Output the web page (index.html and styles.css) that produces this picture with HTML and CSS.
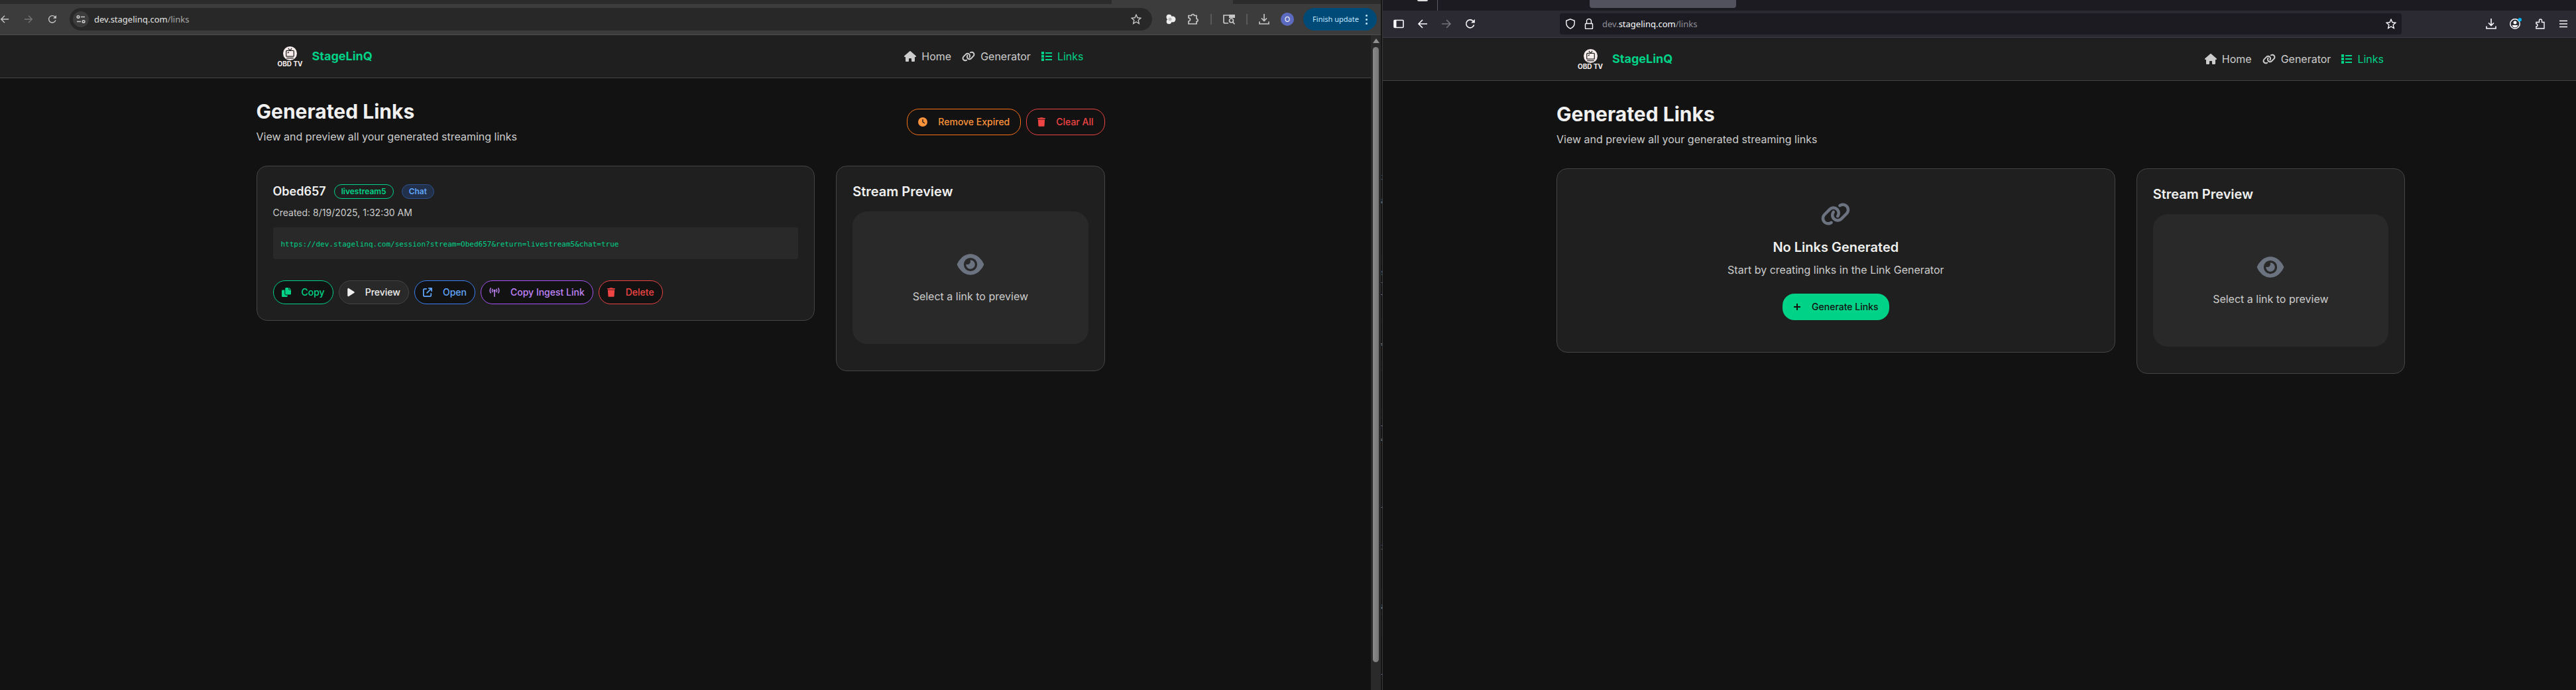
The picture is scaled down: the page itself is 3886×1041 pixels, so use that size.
FILE: index.html
```html
<!DOCTYPE html>
<html lang="en">
<head>
<meta charset="utf-8">
<title>StageLinQ</title>
<link rel="stylesheet" href="styles.css">
</head>
<body>
<svg class="sprite" aria-hidden="true">
  <symbol id="house" viewBox="0 0 576 512"><path d="M575.8 255.5c0 18-15 32.1-32 32.1l-32 0 .7 160.2c0 2.7-.2 5.4-.5 8.1l0 16.2c0 22.1-17.9 40-40 40l-16 0c-1.1 0-2.2 0-3.3-.1c-1.4 .1-2.8 .1-4.2 .1L416 512l-24 0c-22.1 0-40-17.9-40-40l0-24 0-64c0-17.7-14.3-32-32-32l-64 0c-17.7 0-32 14.3-32 32l0 64 0 24c0 22.1-17.9 40-40 40l-24 0-31.9 0c-1.5 0-3-.1-4.5-.2c-1.2 .1-2.4 .2-3.6 .2l-16 0c-22.1 0-40-17.9-40-40l0-112c0-.9 0-1.9 .1-2.8l0-69.7-32 0c-18 0-32-14-32-32.1c0-9 3-17 10-24L266.4 8c7-7 15-8 22-8s15 2 21 7L564.8 231.5c8 7 12 15 11 24z"/></symbol>
  <symbol id="link" viewBox="0 0 640 512"><path d="M579.8 267.7c56.5-56.5 56.5-148 0-204.5c-50-50-128.8-56.5-186.3-15.4l-1.6 1.1c-14.4 10.3-17.7 30.3-7.4 44.6s30.3 17.7 44.6 7.4l1.6-1.1c32.1-22.9 76-19.3 103.8 8.6c31.5 31.5 31.5 82.5 0 114L422.3 334.8c-31.5 31.5-82.5 31.5-114 0c-27.9-27.9-31.5-71.8-8.6-103.8l1.1-1.6c10.3-14.4 6.9-34.4-7.4-44.6s-34.4-6.9-44.6 7.4l-1.1 1.6C206.5 251.2 213 330 263 380c56.5 56.5 148 56.5 204.5 0L579.8 267.7zM60.2 244.3c-56.5 56.5-56.5 148 0 204.5c50 50 128.8 56.5 186.3 15.4l1.6-1.1c14.4-10.3 17.7-30.3 7.4-44.6s-30.3-17.7-44.6-7.4l-1.6 1.1c-32.1 22.9-76 19.3-103.8-8.6C74 372 74 321 105.5 289.5L217.7 177.2c31.5-31.5 82.5-31.5 114 0c27.9 27.9 31.5 71.8 8.6 103.9l-1.1 1.6c-10.3 14.4-6.9 34.4 7.4 44.6s34.4 6.9 44.6-7.4l1.1-1.6C433.5 260.8 427 182 377 132c-56.5-56.5-148-56.5-204.5 0L60.2 244.3z"/></symbol>
  <symbol id="list" viewBox="0 0 16 16"><path d="M0 1h4v4H0zM0 6h4v4H0zM0 11h4v4H0zM6 2h10v2H6zM6 7h10v2H6zM6 12h10v2H6z"/></symbol>
  <symbol id="eye" viewBox="0 0 576 512"><path d="M288 32c-80.8 0-145.5 36.8-192.6 80.6C48.6 156 17.3 208 2.5 243.7c-3.3 7.9-3.3 16.7 0 24.6C17.3 304 48.6 356 95.4 399.4C142.5 443.2 207.2 480 288 480s145.5-36.8 192.6-80.6c46.8-43.5 78.1-95.4 93-131.1c3.3-7.9 3.3-16.7 0-24.6c-14.9-35.7-46.2-87.7-93-131.1C433.5 68.8 368.8 32 288 32zM144 256a144 144 0 1 1 288 0 144 144 0 1 1 -288 0zm144-64c0 35.3-28.7 64-64 64c-7.1 0-13.9-1.2-20.3-3.3c-5.5-1.8-11.9 1.6-11.7 7.4c.3 6.9 1.3 13.8 3.2 20.7c13.7 51.2 66.4 81.6 117.6 67.9s81.6-66.4 67.9-117.6c-11.1-41.5-47.8-69.4-88.6-71.1c-5.8-.2-9.2 6.1-7.4 11.7c2.1 6.4 3.3 13.2 3.3 20.3z"/></symbol>
  <symbol id="clock" viewBox="0 0 512 512"><path d="M256 0a256 256 0 1 1 0 512A256 256 0 1 1 256 0zM232 120l0 136c0 8 4 15.5 10.7 20l96 64c11 7.4 25.9 4.4 33.3-6.7s4.4-25.9-6.7-33.3L280 243.2 280 120c0-13.3-10.7-24-24-24s-24 10.7-24 24z"/></symbol>
  <symbol id="trash" viewBox="0 0 448 512"><path d="M135.2 17.7L128 32 32 32C14.3 32 0 46.3 0 64S14.3 96 32 96l384 0c17.7 0 32-14.3 32-32s-14.3-32-32-32l-96 0-7.2-14.3C307.4 6.8 296.3 0 284.2 0L163.8 0c-12.1 0-23.2 6.8-28.6 17.7zM416 128L32 128 53.2 467c1.6 25.3 22.6 45 47.9 45l245.8 0c25.3 0 46.3-19.7 47.9-45L416 128z"/></symbol>
  <symbol id="copy" viewBox="0 0 512 512"><path d="M240 0h140v100c0 16 12 28 28 28h104v208c0 26-22 48-48 48H240c-26 0-48-22-48-48V48c0-26 22-48 48-48zM412 0l100 96H412zM48 128h112v208c0 44 36 80 80 80h80v48c0 26-22 48-48 48H48c-26 0-48-22-48-48V176c0-26 22-48 48-48z"/></symbol>
  <symbol id="play" viewBox="0 0 384 512"><path d="M73 39c-14.8-9.1-33.4-9.4-48.5-.9S0 62.6 0 80L0 432c0 17.4 9.4 33.4 24.5 41.9s33.7 8.1 48.5-.9L361 297c14.3-8.7 23-24.2 23-41s-8.7-32.2-23-41L73 39z"/></symbol>
  <symbol id="open" viewBox="0 0 512 512"><path d="M320 0c-17.7 0-32 14.3-32 32s14.3 32 32 32l82.7 0L201.4 265.4c-12.5 12.5-12.5 32.8 0 45.3s32.8 12.5 45.3 0L448 109.3l0 82.7c0 17.7 14.3 32 32 32s32-14.3 32-32l0-160c0-17.7-14.3-32-32-32L320 0zM80 32C35.8 32 0 67.8 0 112L0 432c0 44.2 35.8 80 80 80l320 0c44.2 0 80-35.8 80-80l0-112c0-17.7-14.3-32-32-32s-32 14.3-32 32l0 112c0 8.8-7.2 16-16 16L80 448c-8.8 0-16-7.2-16-16l0-320c0-8.8 7.2-16 16-16l112 0c17.7 0 32-14.3 32-32s-14.3-32-32-32L80 32z"/></symbol>
  <symbol id="tower" viewBox="0 0 16 14"><g fill="none" stroke="currentColor" stroke-width="1.5" stroke-linecap="round"><path d="M2.2.9a7 7 0 0 0 0 7M13.8.9a7 7 0 0 1 0 7M5 2.4a4 4 0 0 0 0 4M11 2.4a4 4 0 0 1 0 4M8 5v8.2"/></g><circle cx="8" cy="4.4" r="1.7"/></symbol>
  <symbol id="plus" viewBox="0 0 12 14"><path d="M5 2h2v4h4v2H7v4H5V8H1V6h4z"/></symbol>
  <symbol id="back" viewBox="0 0 16 16"><path d="M15 8H2M8 2L2 8l6 6" fill="none" stroke="currentColor" stroke-width="1.6"/></symbol>
  <symbol id="forward" viewBox="0 0 16 16"><path d="M1 8h13M8 2l6 6-6 6" fill="none" stroke="currentColor" stroke-width="1.6"/></symbol>
  <symbol id="reload" viewBox="0 0 16 16"><path d="M13.6 9.5A6 6 0 1 1 12.2 3.8L14 5.6" fill="none" stroke="currentColor" stroke-width="1.6"/><path d="M14.8 1v5.6H9.2z"/></symbol>
  <symbol id="star" viewBox="0 0 16 16"><path d="M8 1.300l2 4.500 4.900.500-3.700 3.300 1.100 4.900L8 12l-4.300 2.500 1.100-4.900L1.100 6.300 6 5.800z" fill="none" stroke="currentColor" stroke-width="1.400"/></symbol>
  <symbol id="download" viewBox="0 0 16 16"><path d="M8 0v10M4 6.500l4 4 4-4M1 11.500V15h14v-3.500" fill="none" stroke="currentColor" stroke-width="1.600"/></symbol>
  <symbol id="tune" viewBox="0 0 14 14"><g fill="none" stroke="currentColor" stroke-width="1.600"><circle cx="3" cy="3.500" r="1.800"/><circle cx="11" cy="10.500" r="1.800"/><path d="M7 3.500h6M1 10.500h6"/></g></symbol>
  <symbol id="puzzle-c" viewBox="0 0 18 18"><path d="M2 3.500h4.500a2 2 0 0 1 4 0H14v5a2 2 0 0 1 0 4V16H2v-4a2.500 2.500 0 0 0 0-5z" fill="none" stroke="currentColor" stroke-width="1.700"/></symbol>
  <symbol id="puzzle-f" viewBox="0 0 16 16"><path d="M2 15h12V5.500h-3.500V3a2 2 0 0 0-4 0v2.500H2V8a2 2 0 0 1 0 4z" fill="none" stroke="currentColor" stroke-width="1.400"/></symbol>
  <symbol id="lens" viewBox="0 0 18 18"><path d="M8 15H3a2 2 0 0 1-2-2V3h16v4" fill="none" stroke="currentColor" stroke-width="1.700"/><path d="M9 2h9v5H9z"/><circle cx="12.500" cy="11" r="3" fill="none" stroke="currentColor" stroke-width="1.700"/><path d="M14.500 13l3 3.500" stroke="currentColor" stroke-width="1.700"/></symbol>
  <symbol id="butterfly" viewBox="0 0 16 16"><circle cx="5.500" cy="4.800" r="4"/><circle cx="5.500" cy="11.500" r="3.800"/><circle cx="11" cy="8" r="4.500"/><circle cx="7" cy="8" r="2.500" fill="#bbb"/></symbol>
  <symbol id="sidebar" viewBox="0 0 16 14"><rect x="1" y="1.500" width="14" height="11" rx="1" fill="none" stroke="currentColor" stroke-width="1.600"/><path d="M1 1.500h3.500v11H1z"/></symbol>
  <symbol id="shield" viewBox="0 0 16 16"><path d="M8 .8l6.200 2.500v3.200c0 4-2.700 7.200-6.200 8.700-3.500-1.500-6.200-4.700-6.200-8.700V3.300z" fill="none" stroke="currentColor" stroke-width="1.400"/></symbol>
  <symbol id="lock" viewBox="0 0 16 16"><rect x="2.500" y="7.500" width="11" height="8" rx="1" fill="none" stroke="currentColor" stroke-width="1.400"/><path d="M4.500 7.500V4a3.500 3.500 0 0 1 7 0v3.500" fill="none" stroke="currentColor" stroke-width="1.400"/></symbol>
  <symbol id="account" viewBox="0 0 18 18"><circle cx="8" cy="9" r="7.200" fill="none" stroke="currentColor" stroke-width="1.500"/><circle cx="8" cy="7" r="2.500"/><path d="M4 11h8v1.500a5 5 0 0 1-8 0z"/><circle cx="15.300" cy="2.700" r="2.700" fill="#00b3f4"/></symbol>
  <symbol id="menu" viewBox="0 0 14 14"><path d="M1 2.500h12M1 7h12M1 11.500h12" stroke="currentColor" stroke-width="1.400"/></symbol>
  <symbol id="tv" viewBox="0 0 20 20"><circle cx="10" cy="10" r="10" fill="#f6ecec"/><g fill="none" stroke="#222" stroke-width="1.200"><rect x="4.500" y="6" width="11" height="8.500" rx="1"/><path d="M7.500 2.800L10 6l2.500-3.200M5 16.800h10M6.500 9.500l2-1.500"/></g></symbol>
</svg>

<div class="desktop">
  <section class="window chrome">
    <div class="tabs"><div class="active-tab"></div></div>
    <div class="toolbar">
      <div class="nav-buttons">
        <button type="button" aria-label="Back"><svg class="i14"><use href="#back"/></svg></button>
        <button type="button" aria-label="Forward" disabled><svg class="i14"><use href="#forward"/></svg></button>
        <button type="button" aria-label="Reload"><svg class="i14"><use href="#reload"/></svg></button>
      </div>
      <div class="address">
        <button type="button" class="site-info" aria-label="Site information"><svg class="i14"><use href="#tune"/></svg></button>
        <span class="url">dev.stagelinq.com<span class="dim">/links</span></span>
        <button type="button" aria-label="Bookmark"><svg class="i16"><use href="#star"/></svg></button>
      </div>
      <div class="extensions">
        <button type="button" aria-label="Extension"><svg class="i16 light"><use href="#butterfly"/></svg></button>
        <button type="button" aria-label="Extensions"><svg class="i18"><use href="#puzzle-c"/></svg></button>
        <i class="rule"></i>
        <button type="button" aria-label="Search this page"><svg class="i18"><use href="#lens"/></svg></button>
        <i class="rule"></i>
        <button type="button" aria-label="Downloads"><svg class="i16"><use href="#download"/></svg></button>
        <button type="button" class="avatar">O</button>
      </div>
      <button type="button" class="update">Finish update<span class="dots"><i></i><i></i><i></i></span></button>
    </div>
    <div class="viewport">
      <div class="page">
        <header class="site-header">
          <div class="bar">
            <a href="#" class="brand"><span class="logo"><svg><use href="#tv"/></svg><span>OBD TV</span></span>StageLinQ</a>
            <nav>
              <a href="#"><svg class="w18"><use href="#house"/></svg>Home</a>
              <a href="#"><svg class="w20"><use href="#link"/></svg>Generator</a>
              <a href="#" class="current"><svg class="i16"><use href="#list"/></svg>Links</a>
            </nav>
          </div>
        </header>
        <main>
          <div class="container">
            <div class="page-title">
              <div>
                <h1>Generated Links</h1>
                <p>View and preview all your generated streaming links</p>
              </div>
              <div class="actions">
                <button type="button" class="btn orange"><svg class="i14"><use href="#clock"/></svg>Remove Expired</button>
                <button type="button" class="btn red"><svg class="w12"><use href="#trash"/></svg>Clear All</button>
              </div>
            </div>
            <div class="columns">
              <article class="card link-card">
                <div class="link-name"><h2>Obed657</h2><span class="badge green">livestream5</span><span class="badge blue">Chat</span></div>
                <p class="created">Created: 8/19/2025, 1:32:30 AM</p>
                <div class="code"><code>https://dev.stagelinq.com/session?stream=Obed657&amp;return=livestream5&amp;chat=true</code></div>
                <div class="actions">
                  <button type="button" class="btn small green"><svg class="i14"><use href="#copy"/></svg>Copy</button>
                  <button type="button" class="btn small grey"><svg class="w11"><use href="#play"/></svg>Preview</button>
                  <button type="button" class="btn small blue"><svg class="i14"><use href="#open"/></svg>Open</button>
                  <button type="button" class="btn small purple"><svg class="w16"><use href="#tower"/></svg>Copy Ingest Link</button>
                  <button type="button" class="btn small red"><svg class="w12"><use href="#trash"/></svg>Delete</button>
                </div>
              </article>
              <aside class="card preview">
                <h3>Stream Preview</h3>
                <div class="screen"><svg class="hero"><use href="#eye"/></svg><p>Select a link to preview</p></div>
              </aside>
            </div>
          </div>
        </main>
      </div>
      <div class="scrollbar"><i class="arrow"></i><i class="thumb"></i></div>
    </div>
  </section>

  <div class="behind"><pre>i

a
'



]
s
f
t

-

=

]

|

]
t
=





l


i



]
a
]
]



l</pre></div>

  <section class="window firefox">
    <div class="tabs"><i class="pin"></i><i class="divider"></i><div class="hover-tab"></div></div>
    <div class="toolbar">
      <div class="nav-buttons">
        <button type="button" aria-label="Sidebar"><svg class="i16"><use href="#sidebar"/></svg></button>
        <button type="button" aria-label="Back"><svg class="i16"><use href="#back"/></svg></button>
        <button type="button" aria-label="Forward" disabled><svg class="i16"><use href="#forward"/></svg></button>
        <button type="button" aria-label="Reload"><svg class="i16"><use href="#reload"/></svg></button>
      </div>
      <div class="address">
        <button type="button" aria-label="Tracking protection"><svg class="i16"><use href="#shield"/></svg></button>
        <button type="button" aria-label="Connection secure"><svg class="i16"><use href="#lock"/></svg></button>
        <span class="url"><span class="dim">dev.</span>stagelinq.com<span class="dim">/links</span></span>
        <button type="button" aria-label="Bookmark"><svg class="i16"><use href="#star"/></svg></button>
      </div>
      <div class="extensions">
        <button type="button" aria-label="Downloads"><svg class="i16"><use href="#download"/></svg></button>
        <button type="button" aria-label="Account"><svg class="i18"><use href="#account"/></svg></button>
        <button type="button" aria-label="Extensions"><svg class="i16"><use href="#puzzle-f"/></svg></button>
        <button type="button" aria-label="Menu"><svg class="i14"><use href="#menu"/></svg></button>
      </div>
    </div>
    <div class="viewport">
      <div class="page">
        <header class="site-header">
          <div class="bar">
            <a href="#" class="brand"><span class="logo"><svg><use href="#tv"/></svg><span>OBD TV</span></span>StageLinQ</a>
            <nav>
              <a href="#"><svg class="w18"><use href="#house"/></svg>Home</a>
              <a href="#"><svg class="w20"><use href="#link"/></svg>Generator</a>
              <a href="#" class="current"><svg class="i16"><use href="#list"/></svg>Links</a>
            </nav>
          </div>
        </header>
        <main>
          <div class="container">
            <div class="page-title">
              <div>
                <h1>Generated Links</h1>
                <p>View and preview all your generated streaming links</p>
              </div>
            </div>
            <div class="columns">
              <article class="card empty">
                <svg class="hero"><use href="#link"/></svg>
                <h3>No Links Generated</h3>
                <p>Start by creating links in the Link Generator</p>
                <button type="button" class="btn solid"><svg class="w12"><use href="#plus"/></svg>Generate Links</button>
              </article>
              <aside class="card preview">
                <h3>Stream Preview</h3>
                <div class="screen"><svg class="hero"><use href="#eye"/></svg><p>Select a link to preview</p></div>
              </aside>
            </div>
          </div>
        </main>
      </div>
    </div>
  </section>
</div>
</body>
</html>
```
FILE: styles.css
```css
* { box-sizing: border-box; }
body {
  margin: 0;
  background: #121212;
  color: #ccc;
  font: 16px/24px Inter, "Liberation Sans", sans-serif;
}
h1, h2, h3, p { margin: 0; }
a { color: inherit; text-decoration: none; }
button {
  margin: 0;
  padding: 0;
  border: 0;
  background: none;
  color: inherit;
  font: inherit;
}
svg { display: block; flex: none; fill: currentColor; }
.sprite { position: absolute; width: 0; height: 0; }

.i14 { width: 14px; height: 14px; }
.i16 { width: 16px; height: 16px; }
.i18 { width: 18px; height: 18px; }
.w11 { width: 11px; height: 14px; }
.w12 { width: 12px; height: 14px; }
.w16 { width: 16px; height: 14px; }
.w18 { width: 18px; height: 16px; }
.w20 { width: 20px; height: 16px; }
.light { color: #eee; }

.desktop {
  display: grid;
  grid-template-columns: 2083fr 3px 1800fr;
  min-height: 100vh;
}
.window { display: flex; flex-direction: column; min-width: 0; }
.tabs { display: flex; }
.toolbar { display: flex; align-items: center; }
.nav-buttons, .extensions, .address { display: flex; align-items: center; }
.address { flex: 1; }
.url { flex: 1; font: 13px/20px "Noto Sans", sans-serif; }
.viewport { display: flex; flex: 1; }
.page { flex: 1; min-width: 0; }

/* left browser window */
.chrome .tabs { height: 6px; background: #2b2b2b; justify-content: flex-end; padding-right: 223px; }
.active-tab { width: 183px; background: #3c3c3c; }
.chrome .toolbar {
  height: 47px;
  padding-right: 6px;
  background: #3c3c3c;
  border-bottom: 1px solid #4d4d4d;
  color: #c7c7c7;
}
.chrome .nav-buttons { gap: 22px; width: 105px; }
.chrome button:disabled { color: #757575; }
.chrome .address {
  height: 34px;
  gap: 8px;
  padding: 0 16px 0 5px;
  border-radius: 17px;
  background: #282828;
}
.site-info {
  display: grid;
  place-items: center;
  width: 24px;
  height: 24px;
  border-radius: 50%;
  background: #3c3c3c;
}
.chrome .url { color: #e3e3e3; }
.chrome .dim { color: #aaa; }
.chrome .extensions { gap: 17px; padding: 0 14px 0 20px; }
.rule { width: 2px; height: 16px; background: #5a5a5a; }
.avatar {
  width: 20px;
  height: 20px;
  border-radius: 50%;
  background: #5c6bc0;
  color: #fff;
  font-size: 11px;
  line-height: 20px;
}
.update {
  display: flex;
  align-items: center;
  justify-content: center;
  gap: 10px;
  width: 111px;
  height: 34px;
  border-radius: 17px;
  background: #004a77;
  color: #c2e7ff;
  font: 11px/16px "Noto Sans", sans-serif;
  white-space: nowrap;
}
.dots { display: grid; gap: 3px; }
.dots i { width: 3px; height: 3px; border-radius: 50%; background: currentColor; }
.scrollbar {
  display: flex;
  flex-direction: column;
  align-items: center;
  gap: 6px;
  width: 15px;
  padding: 5px 0 42px;
  background: #2a2a2a;
}
.arrow { border: 5px solid transparent; border-top: 0; border-bottom: 7px solid #8f8f8f; }
.thumb { flex: 1; width: 9px; border-radius: 5px; background: linear-gradient(90deg, #8a8a8a, #767676); }

/* sliver of an editor showing between the windows */
.behind {
  overflow: hidden;
  padding-top: 258px;
  background: #161616;
  border-right: 1px solid #3a3a3a;
  color: #999;
}
.behind pre { margin: 0; height: 0; font: 12px/18px "DejaVu Sans Mono", monospace; }

/* right browser window */
.firefox .tabs { height: 16px; background: #1c1b22; }
.pin { width: 16px; height: 2px; margin: 0 14px 0 52px; background: #ddd; border-radius: 0 0 2px 2px; }
.divider { width: 1px; background: #5b5b66; }
.hover-tab { width: 221px; height: 12px; margin-left: 229px; border-radius: 0 0 4px 4px; background: #52525e; }
.firefox .toolbar {
  height: 41px;
  background: #2b2a33;
  border-bottom: 1px solid #3c3c44;
  color: #fbfbfe;
}
.firefox button:disabled { color: #74737a; }
.firefox .nav-buttons { gap: 20px; padding-left: 16px; }
.firefox .address {
  height: 32px;
  gap: 12px;
  margin-left: 127px;
  padding: 0 8px;
  border-radius: 4px;
  background: #1c1b22;
}
.firefox .dim { color: #8f8f97; }
.firefox .extensions { gap: 20px; padding: 0 12px 0 127px; }

/* site */
.site-header { background: #1f1f1f; border-bottom: 1px solid #444; }
.bar {
  display: flex;
  align-items: center;
  justify-content: space-between;
  max-width: 1280px;
  height: 64px;
  margin: 0 auto;
  padding: 0 32px;
}
.brand {
  display: flex;
  align-items: center;
  gap: 14px;
  color: #00d287;
  font-size: 18px;
  font-weight: 700;
}
.logo {
  display: grid;
  justify-items: center;
  width: 38px;
  color: #f6ecec;
  font-size: 10px;
  line-height: 10px;
  white-space: nowrap;
}
.logo svg { width: 21px; height: 21px; }
nav { display: flex; gap: 16px; }
nav a { display: flex; align-items: center; gap: 8px; }
.current { color: #00d287; }
main { padding: 32px 0; }
.container { max-width: 1280px; margin: 0 auto; }
.chrome .site-header, .chrome main { padding-right: 15px; }
.firefox .site-header, .firefox main { padding-left: 4px; }
.page-title {
  display: flex;
  align-items: center;
  justify-content: space-between;
  margin-bottom: 32px;
}
h1 { margin-bottom: 8px; color: #f0f0f0; font-size: 30px; line-height: 36px; }
.actions { display: flex; gap: 8px; }
.btn {
  display: flex;
  align-items: center;
  gap: 16px;
  height: 40px;
  padding: 0 16px;
  border: 1px solid currentColor;
  border-radius: 18px;
  background: #121212;
  font-size: 14px;
  font-weight: 500;
  line-height: 20px;
  white-space: nowrap;
}
.btn.small { height: 36px; padding: 0 12px; }
.btn.orange { color: #fb923c; border-color: #f97316; }
.btn.red { color: #ef4444; }
.btn.green { color: #00d287; }
.btn.blue { color: #60a5fa; border-color: #3b82f6; }
.btn.purple { color: #c084fc; border-color: #a855f7; }
.btn.grey { color: #f0f0f0; background: #292929; border-color: #444; }
.btn.solid { color: #121212; background: #00d287; border: 0; }
.columns {
  display: grid;
  grid-template-columns: repeat(3, 1fr);
  align-items: start;
  gap: 32px;
}
.card { padding: 24px; border: 1px solid #444; border-radius: 16px; background: #1f1f1f; }
.link-card, .empty { grid-column: span 2; }
.link-name { display: flex; align-items: center; gap: 12px; height: 28px; margin-bottom: 8px; }
h2 { color: #f0f0f0; font-size: 18px; line-height: 28px; font-weight: 600; }
h3 { color: #f0f0f0; font-size: 20px; line-height: 28px; font-weight: 600; }
.badge {
  padding: 2px 10px;
  border: 1px solid currentColor;
  border-radius: 11px;
  font-size: 12px;
  line-height: 16px;
  font-weight: 600;
}
.badge.green { color: #00d287; }
.badge.blue { color: #60a5fa; background: #22304a; border-color: #2b508c; }
.created { font-size: 14px; line-height: 20px; }
.code {
  margin: 12px 0 32px;
  padding: 14px 12px 10px;
  border-radius: 4px;
  background: #292929;
  color: #00d287;
}
.code code { display: block; font: 11px/24px "DejaVu Sans Mono", monospace; }
.preview { padding-bottom: 40px; }
.screen {
  display: flex;
  flex-direction: column;
  align-items: center;
  justify-content: center;
  gap: 16px;
  height: 200px;
  margin-top: 16px;
  border-radius: 22px;
  background: #292929;
}
.hero { width: 46px; height: 40px; padding: 2px 0; color: #6b7280; }
.empty { display: flex; flex-direction: column; align-items: center; padding: 48px; }
.empty h3 { margin: 16px 0 8px; }
.empty .btn { margin-top: 24px; }
```
